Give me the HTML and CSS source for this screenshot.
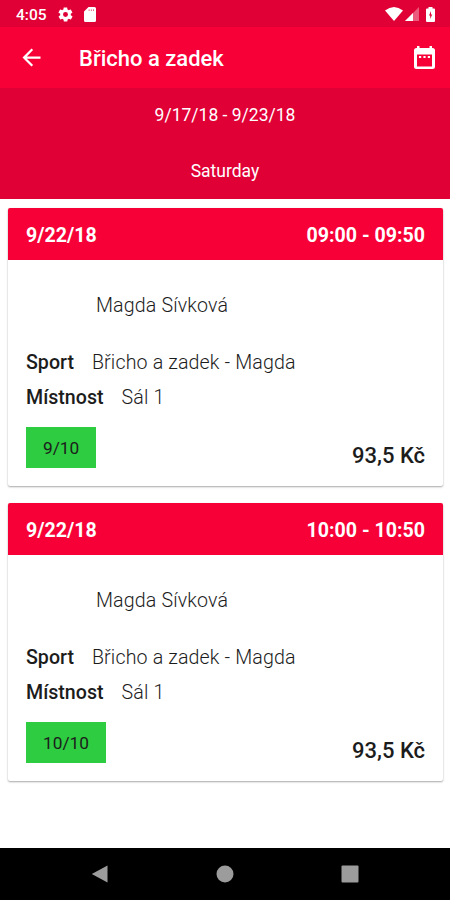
FILE: index.html
```html
<!DOCTYPE html>
<html lang="cs">
<head>
    <meta charset="UTF-8">
    <meta name="viewport" content="width=device-width, initial-scale=1.0">
    <title>Břicho a zadek</title>
    <link rel="stylesheet" href="styles.css">
</head>
<body>
    <div class="screen">
        <!-- Status bar -->
        <div class="status-bar">
            <span class="clock">4:05</span>
            <svg class="icon-gear" width="17" height="17" viewBox="0 0 24 24"><path fill-rule="evenodd" d="M19.4 13c0-.3.1-.6.1-1s0-.7-.1-1l2.1-1.6c.2-.2.2-.4.1-.6l-2-3.5c-.1-.2-.4-.3-.6-.2l-2.5 1c-.5-.4-1.1-.7-1.7-1l-.4-2.6c0-.2-.2-.4-.5-.4h-4c-.2 0-.4.2-.5.4l-.4 2.6c-.6.3-1.1.6-1.7 1l-2.5-1c-.2-.1-.5 0-.6.2l-2 3.5c-.1.2-.1.5.1.6L4.600 11c0 .3-.1.7-.1 1s0 .7.1 1l-2.1 1.6c-.2.2-.2.4-.1.6l2 3.5c.1.2.4.3.6.2l2.5-1c.5.4 1.1.7 1.7 1l.4 2.6c0 .2.2.4.5.4h4c.2 0 .5-.2.5-.4l.4-2.6c.6-.3 1.2-.6 1.7-1l2.5 1c.2.1.5 0 .6-.2l2-3.500c.1-.2.1-.5-.1-.6zM12 15.500a3.500 3.500 0 1 1 0-7 3.500 3.500 0 0 1 0 7z"/></svg>
            <svg class="icon-card" width="12" height="15" viewBox="0 0 12 15"><path fill-rule="evenodd" d="M4.5 0H10.5Q12 0 12 1.5V13.5Q12 15 10.5 15H1.5Q0 15 0 13.500V4.500zM4.700 2.500V3.800H5.500V2.500zM6.900 2.500V3.800H7.700V2.500zM9.100 2.500V3.800H9.900V2.500z"/></svg>
            <div class="signals">
                <svg width="18" height="14" viewBox="0 0 18 14"><path d="M0 3.500Q9-3.500 18 3.500L9 14z"/></svg>
                <svg class="icon-cell" width="14" height="14" viewBox="0 0 14 14"><path opacity=".35" d="M14 0V14H0z"/><path d="M8 6V14H0z"/></svg>
                <svg class="icon-battery" width="9" height="15" viewBox="0 0 9 15"><path fill-rule="evenodd" d="M2.500 0H6.500V1.500H8Q9 1.500 9 2.500V14Q9 15 8 15H1Q0 15 0 14V2.500Q0 1.500 1 1.500H2.500zM5 4L3 8.500H4.200V12L6.200 7.500H5z"/></svg>
            </div>
        </div>

        <!-- App bar -->
        <header class="app-bar">
            <svg class="back" width="27" height="27" viewBox="0 0 24 24"><path d="M20 11H7.830l5.590-5.590L12 4l-8 8 8 8 1.410-1.410L7.830 13H20z"/></svg>
            <h1>Břicho a zadek</h1>
            <svg class="calendar" width="21" height="23" viewBox="0 0 21 23"><path fill-rule="evenodd" d="M3 0H5.500V2H15.500V0H18V2H18.500Q21 2 21 4.500V20.500Q21 23 18.500 23H2.500Q0 23 0 20.500V4.500Q0 2 2.500 2H3zM3 8.500V20.500H18V8.500z"/><path d="M5 10H7.200V12H5zM9.400 10H11.600V12H9.400zM13.800 10H16V12H13.800z"/></svg>
        </header>

        <div class="week">
            <div class="week-row">9/17/18 - 9/23/18</div>
            <div class="week-row">Saturday</div>
        </div>

        <!-- Lessons -->
        <main class="lessons">
            <article class="card">
                <div class="card-header">
                    <span>9/22/18</span>
                    <span>09:00 - 09:50</span>
                </div>
                <div class="card-body">
                    <p class="trainer">Magda Sívková</p>
                    <p class="detail"><b>Sport</b><span>Břicho a zadek - Magda</span></p>
                    <p class="detail"><b>Místnost</b><span>Sál 1</span></p>
                    <div class="card-footer">
                        <span class="capacity">9/10</span>
                        <span class="price">93,5 Kč</span>
                    </div>
                </div>
            </article>

            <article class="card">
                <div class="card-header">
                    <span>9/22/18</span>
                    <span>10:00 - 10:50</span>
                </div>
                <div class="card-body">
                    <p class="trainer">Magda Sívková</p>
                    <p class="detail"><b>Sport</b><span>Břicho a zadek - Magda</span></p>
                    <p class="detail"><b>Místnost</b><span>Sál 1</span></p>
                    <div class="card-footer">
                        <span class="capacity">10/10</span>
                        <span class="price">93,5 Kč</span>
                    </div>
                </div>
            </article>
        </main>

        <!-- Navigation bar -->
        <nav class="nav-bar">
            <svg width="18" height="18" viewBox="0 0 18 18"><path d="M.8 9L16.500 .5V17.500z"/></svg>
            <svg width="18" height="18" viewBox="0 0 18 18"><circle cx="9" cy="9" r="8.500"/></svg>
            <svg width="18" height="18" viewBox="0 0 18 18"><rect x=".5" y=".5" width="17" height="17" rx="1"/></svg>
        </nav>
    </div>
</body>
</html>
```
FILE: styles.css
```css
:root {
    --primary: #f70037;
    --primary-dark: #e10036;
    --green: #2ecc40;
    --text: #1c1c1c;
}

* {
    margin: 0;
    padding: 0;
    box-sizing: border-box;
}

body {
    background-color: #fff;
    color: var(--text);
    font-family: Roboto, sans-serif;
}

svg {
    display: block;
    flex: none;
    fill: currentColor;
}

.screen {
    display: flex;
    flex-direction: column;
    height: 900px;
    width: 450px;
    overflow: hidden;
}

.status-bar {
    display: flex;
    align-items: center;
    height: 27px;
    padding: 1px 15px 0 16px;
    background-color: var(--primary-dark);
    color: #fff;
}

.clock {
    width: 41px;
    padding-top: 1px;
    font-size: 15.5px;
    font-weight: 500;
}

.icon-card {
    margin-left: 10px;
}

.signals {
    display: flex;
    align-items: center;
    margin-left: auto;
}

.icon-cell {
    margin-left: 2px;
}

.icon-battery {
    margin-left: 7px;
}

.app-bar {
    display: flex;
    align-items: center;
    height: 61px;
    padding: 0 15px 0 18px;
    background-color: var(--primary);
    color: #fff;
}

.app-bar h1 {
    margin-left: 34px;
    padding-top: 1px;
    font-size: 22px;
    font-weight: 500;
}

.calendar {
    margin-left: auto;
}

.week {
    height: 111px;
    background-color: var(--primary-dark);
    color: #fff;
    text-align: center;
    font-size: 17.5px;
}

.week-row {
    height: 55.5px;
    line-height: 55px;
}

.lessons {
    flex: 1;
    padding: 9px 7px 0 8px;
}

.card {
    height: 278px;
    margin-bottom: 17px;
    border-radius: 2px;
    box-shadow: 0 1px 2px rgba(0, 0, 0, 0.35);
    overflow: hidden;
}

.card-header {
    display: flex;
    justify-content: space-between;
    height: 52px;
    padding: 0 18px;
    line-height: 55px;
    background-color: var(--primary);
    color: #fff;
    font-size: 19.6px;
    font-weight: 700;
}

.card-body {
    padding: 28px 18px 0;
    font-size: 19.6px;
    font-weight: 300;
}

.trainer {
    margin-bottom: 22px;
    padding-left: 70px;
    line-height: 35px;
    letter-spacing: 0.15px;
}

.detail {
    display: flex;
    gap: 18px;
    line-height: 35px;
}

.detail b {
    font-weight: 500;
}

.detail span {
    letter-spacing: 0.15px;
}

.card-footer {
    display: flex;
    justify-content: space-between;
    align-items: flex-end;
    margin-top: 12px;
}

.capacity {
    height: 41px;
    padding: 0 17px;
    line-height: 43px;
    background-color: var(--green);
    font-size: 17.3px;
    font-weight: 400;
}

.price {
    font-size: 22px;
    font-weight: 500;
    line-height: 25px;
}

.nav-bar {
    display: flex;
    justify-content: center;
    align-items: center;
    gap: 107px;
    height: 52px;
    background-color: #000;
    color: #9c9c9c;
}
```
